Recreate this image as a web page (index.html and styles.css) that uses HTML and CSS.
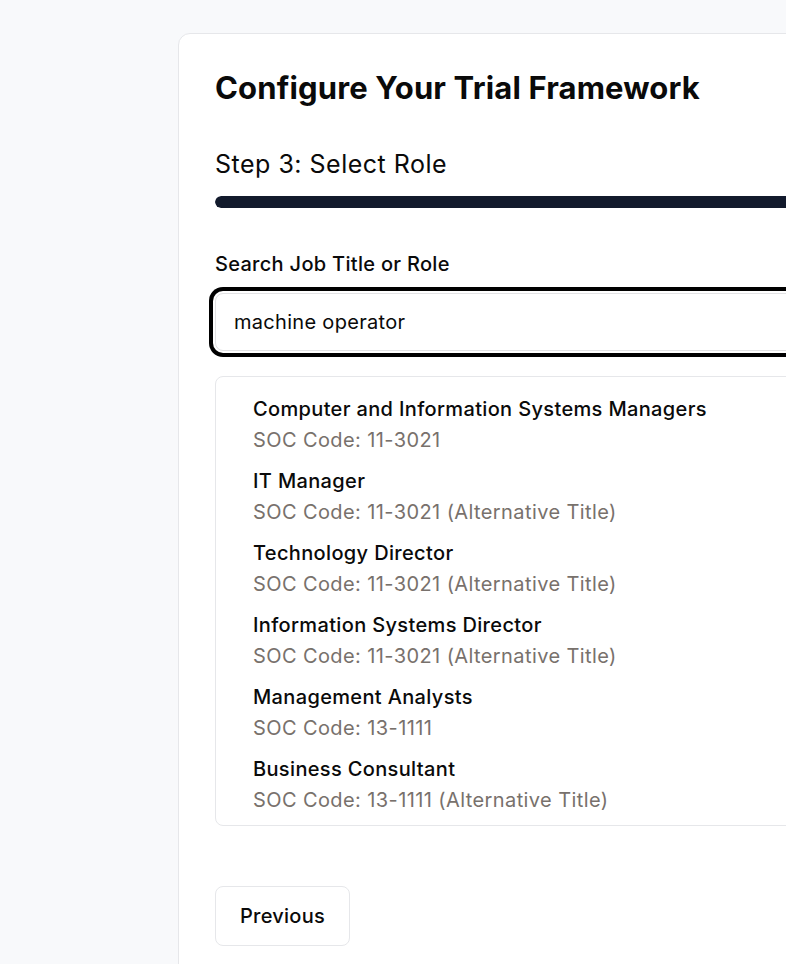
FILE: index.html
```html
<!DOCTYPE html>
<html lang="en">
<head>
<meta charset="utf-8">
<title>Configure Your Trial Framework</title>
<link rel="stylesheet" href="styles.css">
</head>
<body>
<main class="page">
  <section class="card">
    <h1 class="title">Configure Your Trial Framework</h1>
    <h2 class="step">Step 3: Select Role</h2>
    <div class="progress"><div class="progress-fill"></div></div>

    <label class="label" for="role">Search Job Title or Role</label>
    <div class="input-wrap">
      <input id="role" class="input" type="text" value="machine operator">
    </div>

    <ul class="results">
      <li class="result"><div class="result-title">Computer and Information Systems Managers</div><div class="result-code">SOC Code: 11-3021</div></li>
      <li class="result"><div class="result-title">IT Manager</div><div class="result-code">SOC Code: 11-3021 (Alternative Title)</div></li>
      <li class="result"><div class="result-title">Technology Director</div><div class="result-code">SOC Code: 11-3021 (Alternative Title)</div></li>
      <li class="result"><div class="result-title">Information Systems Director</div><div class="result-code">SOC Code: 11-3021 (Alternative Title)</div></li>
      <li class="result"><div class="result-title">Management Analysts</div><div class="result-code">SOC Code: 13-1111</div></li>
      <li class="result"><div class="result-title">Business Consultant</div><div class="result-code">SOC Code: 13-1111 (Alternative Title)</div></li>
    </ul>

    <div class="actions">
      <button class="btn" type="button">Previous</button>
    </div>
  </section>
</main>
</body>
</html>
```

FILE: styles.css
```css
* { box-sizing: border-box; }

html, body {
  margin: 0;
  padding: 0;
  background: #f8f9fb;
  overflow: hidden;
}

body {
  font-family: Inter, "Noto Sans", "Liberation Sans", sans-serif;
  color: #0a0a0a;
  -webkit-font-smoothing: antialiased;
}

.page {
  padding: 33px 0 0 178px;
  width: 1200px;
}

.card {
  width: 900px;
  min-height: 960px;
  background: #ffffff;
  border: 1px solid #e6e7ea;
  border-radius: 12px;
  padding: 35px 36px 40px 36px;
}

.title {
  margin: 0;
  font-size: 31px;
  line-height: 38px;
  font-weight: 700;
  letter-spacing: 0.15px;
  color: #0a0a0a;
}

.step {
  margin: 41px 0 0 0;
  font-size: 25px;
  line-height: 32px;
  font-weight: 400;
  letter-spacing: 0.5px;
  color: #0a0a0a;
}

.progress {
  margin-top: 16px;
  height: 12px;
  border-radius: 6px;
  background: #e5e7eb;
  overflow: hidden;
}

.progress-fill {
  width: 100%;
  height: 100%;
  background: #121a2c;
  border-radius: 6px;
}

.label {
  display: block;
  margin-top: 42px;
  font-size: 20px;
  line-height: 28px;
  font-weight: 500;
  letter-spacing: 0.3px;
  color: #0a0a0a;
}

.input-wrap {
  margin-top: 15px;
}

.input {
  display: block;
  width: 100%;
  height: 58px;
  padding: 0 18px;
  font-family: inherit;
  font-size: 20px;
  letter-spacing: 0.3px;
  color: #0a0a0a;
  background: #ffffff;
  border: 1px solid #e2e2e4;
  border-radius: 8px;
  outline: none;
  box-shadow: 0 0 0 2px #ffffff, 0 0 0 6px #000000;
}

.results {
  list-style: none;
  margin: 25px 0 0 0;
  padding: 11px 0 0 0;
  height: 450px;
  overflow: hidden;
  border: 1px solid #e6e7ea;
  border-radius: 8px;
}

.result {
  padding: 7px 37px 6px 37px;
}

.result-title {
  font-size: 20px;
  line-height: 28px;
  font-weight: 500;
  letter-spacing: 0.35px;
  color: #0a0a0a;
}

.result-code {
  margin-top: 3px;
  font-size: 20px;
  line-height: 28px;
  font-weight: 400;
  letter-spacing: 0.4px;
  color: #78716c;
}

.actions {
  margin-top: 60px;
  display: flex;
}

.btn {
  height: 60px;
  padding: 0 24px;
  font-family: inherit;
  font-size: 20px;
  font-weight: 500;
  letter-spacing: 0.25px;
  color: #0a0a0a;
  background: #ffffff;
  border: 1px solid #e6e7ea;
  border-radius: 8px;
}
```
